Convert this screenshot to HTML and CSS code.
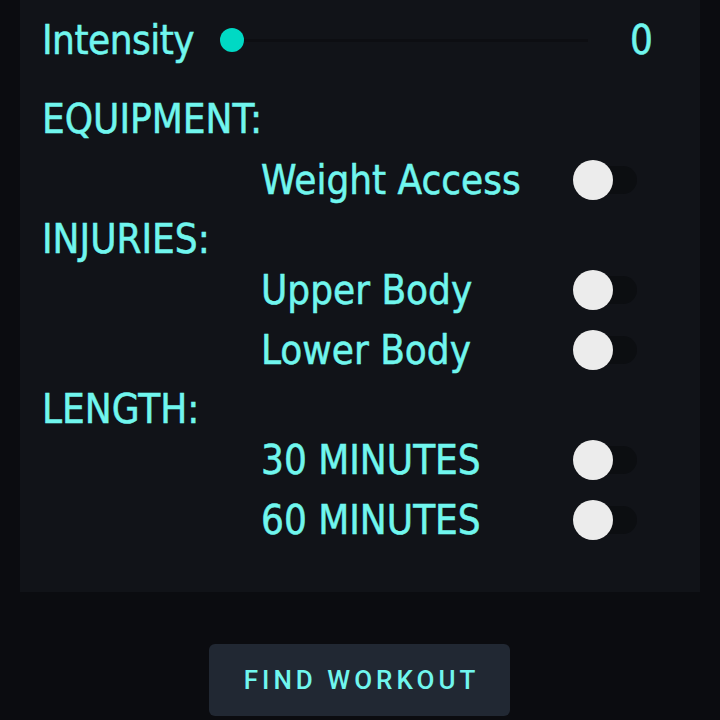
FILE: index.html
```html
<!DOCTYPE html>
<html>
<head>
<meta charset="utf-8">
<link rel="stylesheet" href="styles.css">
</head>
<body>
<div class="page">
  <div class="panel">
    <div class="intensity-row">
      <span class="intensity-label">Intensity</span>
      <div class="slider">
        <span class="slider-thumb"></span>
        <span class="slider-track"></span>
      </div>
      <span class="slider-value">0</span>
    </div>

    <div class="section-title first">EQUIPMENT:</div>
    <div class="option-row">
      <span class="option-label">Weight Access</span>
      <span class="toggle"><span class="toggle-thumb"></span></span>
    </div>

    <div class="section-title">INJURIES:</div>
    <div class="option-row">
      <span class="option-label">Upper Body</span>
      <span class="toggle"><span class="toggle-thumb"></span></span>
    </div>
    <div class="option-row">
      <span class="option-label">Lower Body</span>
      <span class="toggle"><span class="toggle-thumb"></span></span>
    </div>

    <div class="section-title">LENGTH:</div>
    <div class="option-row">
      <span class="option-label">30 MINUTES</span>
      <span class="toggle"><span class="toggle-thumb"></span></span>
    </div>
    <div class="option-row">
      <span class="option-label">60 MINUTES</span>
      <span class="toggle"><span class="toggle-thumb"></span></span>
    </div>
  </div>

  <div class="actions">
    <button class="find-btn">FIND WORKOUT</button>
  </div>
</div>
</body>
</html>
```

FILE: styles.css
```css
html, body {
  margin: 0;
  padding: 0;
  background: #0b0c10;
}

.page {
  width: 720px;
  height: 720px;
  overflow: hidden;
  background: #0b0c10;
}

.panel {
  margin: 0 20px;
  background: #111318;
  padding: 10px 0 42px 22px;
  font-family: "DejaVu Sans Condensed", "DejaVu Sans", sans-serif;
  color: #70f6ee;
  font-size: 40px;
  -webkit-text-stroke: 0.5px #70f6ee;
}

.intensity-row {
  height: 60px;
  display: flex;
  align-items: center;
  margin-bottom: 20px;
}

.intensity-label {
  width: 178px;
  letter-spacing: -0.5px;
}

.slider {
  width: 368px;
  height: 24px;
  display: flex;
  align-items: center;
}

.slider-thumb {
  width: 24px;
  height: 24px;
  border-radius: 50%;
  background: #00d9c4;
  flex: none;
}

.slider-track {
  flex: 1;
  height: 3px;
  background: #0d0e12;
}

.slider-value {
  margin-left: 42px;
}

.section-title {
  height: 42px;
  line-height: 42px;
  padding-top: 8px;
}

.section-title.first {
  margin-bottom: 10px;
}

.option-row {
  height: 60px;
  display: flex;
  align-items: center;
  padding-left: 219px;
}

.option-label {
  width: 312px;
}

.toggle {
  width: 64px;
  height: 28px;
  border-radius: 14px;
  background: #0c0e11;
  display: flex;
  align-items: center;
}

.toggle-thumb {
  width: 40px;
  height: 40px;
  border-radius: 50%;
  background: #ececec;
  flex: none;
}

.actions {
  display: flex;
  justify-content: center;
  padding-top: 52px;
}

.find-btn {
  width: 301px;
  height: 72px;
  margin-left: -1px;
  border: none;
  border-radius: 6px;
  background: #212833;
  color: #70f6ee;
  font-family: Roboto, "Noto Sans", sans-serif;
  font-weight: 500;
  font-size: 26px;
  letter-spacing: 4px;
  padding: 0 0 0 4px;
}
```
